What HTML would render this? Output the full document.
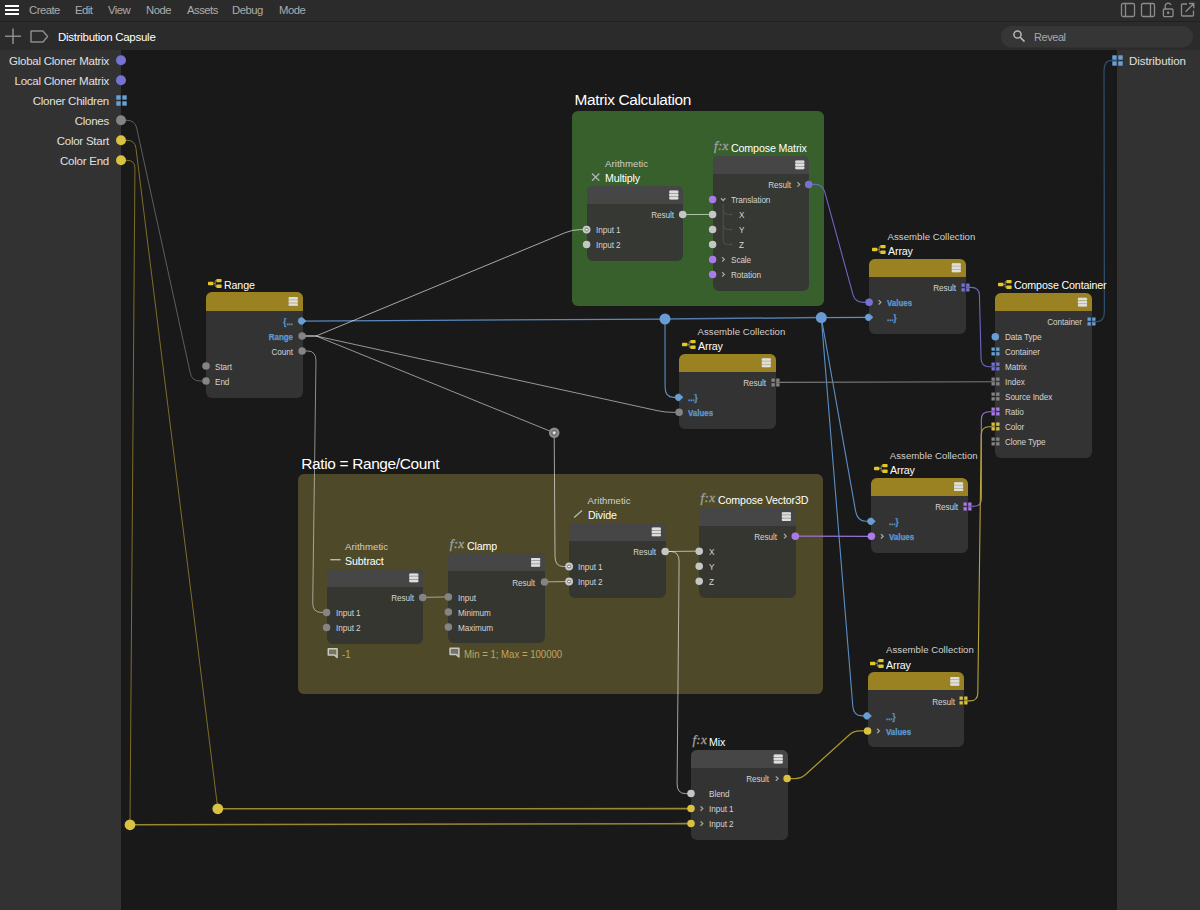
<!DOCTYPE html>
<html lang="en">
<head>
<meta charset="utf-8">
<title>Distribution Capsule</title>
<style>
*{box-sizing:border-box;margin:0;padding:0}
html,body{width:1200px;height:910px;overflow:hidden;background:#191919}
body{position:relative;font-family:"Liberation Sans",sans-serif;color:#d0d0d0;font-size:9px}
.abs,.node,.ttl,.sub,.pl,.sl,.fx,.ic,.cm,.grp,.gt,svg.lay{position:absolute}
#menubar{position:absolute;left:0;top:0;width:1200px;height:21px;background:#2b2b2b}
#toolbar{position:absolute;left:0;top:22px;width:1200px;height:28px;background:#2b2b2b}
#sep{position:absolute;left:0;top:21px;width:1200px;height:1px;background:#202020}
#lp{position:absolute;left:0;top:50px;width:121px;height:860px;background:#323232}
#rp{position:absolute;left:1117px;top:50px;width:83px;height:860px;background:#323232}
.mi{position:absolute;top:2.6px;font-size:11.3px;color:#acacac;line-height:14px;white-space:nowrap;letter-spacing:-0.5px}
.node{border-radius:6px;overflow:hidden}
.hd{position:absolute;left:0;top:0;right:0;height:18.4px}
.ttl{font-size:11.6px;line-height:15px;color:#fff;white-space:nowrap;letter-spacing:-0.15px;transform:scaleX(.92);transform-origin:0 50%}
.sub{font-size:9.6px;line-height:12px;color:#d0d0d0;white-space:nowrap;letter-spacing:0.05px}
.pl{font-size:8.8px;line-height:14px;color:#d4d4d4;white-space:nowrap;letter-spacing:-0.08px;transform:scaleX(.93);transform-origin:0 50%}
.pl.b{font-weight:bold;color:#5b9bd5;letter-spacing:0;transform:scaleX(.9);-webkit-text-stroke:0.25px #5b9bd5}
.r{text-align:right}
.pl.r{transform-origin:100% 50%}
.sl{font-size:11.5px;line-height:16px;color:#e0e0e0;white-space:nowrap;letter-spacing:-0.24px}
.fx{font-family:"Liberation Serif",serif;font-style:italic;font-size:13px;line-height:16px;color:#a2a2a2;letter-spacing:0.3px;-webkit-text-stroke:0.3px #a2a2a2}
.cm{font-size:10px;line-height:12px;color:#c4a45c;white-space:nowrap;transform:scaleX(.96);transform-origin:0 50%}
.grp{border-radius:6px}
.gt{font-size:15.4px;line-height:18px;color:#fff;white-space:nowrap;letter-spacing:-0.33px}
svg.lay .cv{fill:none;stroke:#a6a6a6;stroke-width:1.25}
</style>
</head>
<body>
<div class="grp" style="left:571.7px;top:110.7px;width:252.4px;height:195.4px;background:#37602d"></div>
<div class="grp" style="left:297.8px;top:474.2px;width:525.4px;height:219.5px;background:#4e4a29"></div>
<div class="gt" style="left:574.6px;top:90.6px">Matrix Calculation</div>
<div class="gt" style="left:301.3px;top:454.600px">Ratio = Range/Count</div>
<div id="lp"></div><div id="rp"></div>
<svg class="lay" style="left:0;top:0" width="1200" height="910" viewBox="0 0 1200 910">
<path d="M121 120.3L127 120.3Q135 120.3 136.71 128.12L190.29 373.18Q192 381 200 381L206 381" stroke="#5e5e5e" stroke-width="1.0" fill="none"/>
<path d="M121 140.3L127 140.3Q135 140.3 135.98 148.24L217.8 808.8" stroke="#7d6e26" stroke-width="1.0" fill="none"/>
<path d="M217.8 808.8L691 808.6" stroke="#9a8732" stroke-width="1.6" fill="none"/>
<path d="M121 160.3L127 160.3Q135 160.3 134.94 168.3L130 824.8" stroke="#7d6e26" stroke-width="1.0" fill="none"/>
<path d="M130 824.8L669 823.72Q677 823.7 685 823.64L691 823.6" stroke="#9a8732" stroke-width="1.6" fill="none"/>
<path d="M302.1 321L665 319" stroke="#588abf" stroke-width="1.25" fill="none"/>
<path d="M665 319L821.3 317.6" stroke="#4f7aa9" stroke-width="1.5" fill="none"/>
<path d="M821.3 317.6L869.1 317.35" stroke="#5b8ec6" stroke-width="1.4" fill="none"/>
<path d="M665 319L665.09 387.35Q665.1 397.35 673.5 397.35L679.1 397.35" stroke="#5b8ec6" stroke-width="1.1" fill="none"/>
<path d="M821.3 317.6L855.65 511.45Q857.4 521.3 865.8 521.3L871.4 521.3" stroke="#5b8ec6" stroke-width="1.1" fill="none"/>
<path d="M821.3 317.6L852.79 705.93Q853.6 715.9 862 715.9L867.6 715.9" stroke="#5b8ec6" stroke-width="1.1" fill="none"/>
<path d="M302.1 336L316.1 336" stroke="#8e8e8e" stroke-width="2.0" fill="none"/>
<path d="M316.1 336L565.21 232.67Q572.6 229.6 580.6 229.6L586.6 229.6" stroke="#ffffff" stroke-width="1.0" stroke-opacity="0.62" fill="none"/>
<path d="M316.1 336L657.28 410.64Q665.1 412.35 673.1 412.35L679.1 412.35" stroke="#ffffff" stroke-width="1.0" stroke-opacity="0.55" fill="none"/>
<path d="M316.1 336L554.2 432.8" stroke="#ffffff" stroke-width="1.0" stroke-opacity="0.55" fill="none"/>
<path d="M554.2 432.8L555.03 556.5Q555.1 566.5 563.5 566.5L569.1 566.5" stroke="#ffffff" stroke-width="1.0" stroke-opacity="0.6" fill="none"/>
<path d="M302.1 351L307.7 351Q316.1 351 315.97 361L312.73 602.4Q312.6 612.4 321 612.4L326.6 612.4" stroke="#ffffff" stroke-width="1.0" stroke-opacity="0.5" fill="none"/>
<path d="M682.7 214.6L712.6 214.4" stroke="#ffffff" stroke-width="1.0" stroke-opacity="0.62" fill="none"/>
<path d="M808.7 184.4L814.7 184.4Q822.7 184.4 824.82 192.11L852.98 294.64Q855.1 302.35 863.1 302.35L869.1 302.35" stroke="#6b67c2" stroke-width="1.1" fill="none"/>
<path d="M965.2 287.35L971.2 287.35Q979.2 287.35 979.41 295.35L981.09 358.7Q981.3 366.7 989.3 366.7L995.3 366.7" stroke="#6b67c2" stroke-width="1.1" fill="none"/>
<path d="M775.2 382.35L995.3 381.7" stroke="#787878" stroke-width="1.05" fill="none"/>
<path d="M1091.4 321.7L1096.6 321.7Q1104.4 321.7 1104.38 311.7L1104.02 70.3Q1104 60.3 1111.8 60.3L1117 60.3" stroke="#30506f" stroke-width="1.2" fill="none"/>
<path d="M422.7 597.4L448.4 596.9" stroke="#ffffff" stroke-width="1.0" stroke-opacity="0.5" fill="none"/>
<path d="M544.5 581.9L569.1 581.5" stroke="#ffffff" stroke-width="1.0" stroke-opacity="0.55" fill="none"/>
<path d="M665.2 551.5L699.2 551.15" stroke="#ffffff" stroke-width="1.0" stroke-opacity="0.6" fill="none"/>
<path d="M665.2 551.5L670.8 551.5Q679.2 551.5 679.11 561.5L677.09 783.6Q677 793.6 685.4 793.6L691 793.6" stroke="#ffffff" stroke-width="1.0" stroke-opacity="0.6" fill="none"/>
<path d="M795.3 536.15L871.4 536.3" stroke="#9a72d6" stroke-width="1.2" fill="none"/>
<path d="M967.5 506.3L973.5 506.3Q981.5 506.3 981.48 498.3L981.32 419.7Q981.3 411.7 989.3 411.7L995.3 411.7" stroke="#9a72d6" stroke-width="1.1" fill="none"/>
<path d="M963.7 700.9L969.7 700.9Q977.7 700.9 977.81 692.9L981.19 434.7Q981.3 426.7 989.3 426.7L995.3 426.7" stroke="#b8a238" stroke-width="1.1" fill="none"/>
<path d="M787.1 778.6L795.1 778.6Q801.1 778.6 805.54 774.57L849.16 734.93Q853.6 730.9 859.6 730.9L867.6 730.9" stroke="#a8942f" stroke-width="1.3" fill="none"/>
<circle cx="665" cy="319" r="5.500" fill="#689cd2"/>
<circle cx="821.3" cy="317.6" r="5.500" fill="#689cd2"/>
<circle cx="217.8" cy="808.8" r="5.400" fill="#d9c141"/>
<circle cx="130" cy="824.8" r="5.400" fill="#d9c141"/>
<circle cx="554.2" cy="432.8" r="5.300" fill="#8c8c8c"/><circle cx="554.2" cy="432.8" r="2.600" fill="none" stroke="#6c6c6c" stroke-width="1"/><circle cx="554.2" cy="432.8" r="1.400" fill="#e6e6e6"/>
</svg>
<div class="node" style="left:206px;top:292.2px;width:96.5px;height:105.4px;background:#333333"><div class="hd" style="background:#9a8223"></div></div>
<div class="ttl" style="left:224.4px;top:277px">Range</div>
<svg class="ic" style="left:208.4px;top:278.9px" width="14" height="10" viewBox="0 0 14 10"><path d="M5.4 4.5h1.8M7.2 1.7v5.6M7.2 1.700h1.2M7.2 7.3h1.2" stroke="#8a8a8a" stroke-width="0.9" fill="none"/><rect x="0" y="2.8" width="5.4" height="3.4" rx="0.7" fill="#e3c725"/><rect x="8.3" y="0" width="5.3" height="3.300" rx="0.7" fill="#e3c725"/><rect x="8.3" y="5.6" width="5.3" height="3.300" rx="0.7" fill="#e3c725"/></svg>
<div class="pl b r" style="left:206px;width:87px;top:315px">{...</div>
<div class="pl b r" style="left:206px;width:87px;top:330px">Range</div>
<div class="pl r" style="left:206px;width:87px;top:345px">Count</div>
<div class="pl" style="left:215.3px;top:360px">Start</div>
<div class="pl" style="left:215.3px;top:375px">End</div>
<div class="node" style="left:586.6px;top:185.8px;width:96.5px;height:75.4px;background:#353833"><div class="hd" style="background:#464646"></div></div>
<div class="ttl" style="left:605px;top:170px">Multiply</div>
<div class="sub" style="left:605px;top:158px">Arithmetic</div>
<div class="pl r" style="left:586.6px;width:87px;top:208px">Result</div>
<div class="pl" style="left:595.9px;top:223px">Input 1</div>
<div class="pl" style="left:595.9px;top:238px">Input 2</div>
<div class="node" style="left:712.6px;top:155.6px;width:96.5px;height:135.4px;background:#353833"><div class="hd" style="background:#464646"></div></div>
<div class="ttl" style="left:731px;top:140px">Compose Matrix</div>
<div class="fx" style="left:714px;top:138.25px">f:x</div>
<div class="pl r" style="left:712.6px;width:78px;top:178px">Result</div>
<div class="pl" style="left:730.8px;top:193px">Translation</div>
<div class="pl" style="left:739.3px;top:208px">X</div>
<div class="pl" style="left:739.3px;top:223px">Y</div>
<div class="pl" style="left:739.3px;top:238px">Z</div>
<div class="pl" style="left:730.8px;top:253px">Scale</div>
<div class="pl" style="left:730.8px;top:268px">Rotation</div>
<div class="node" style="left:869.1px;top:258.55px;width:96.5px;height:75.4px;background:#333333"><div class="hd" style="background:#9a8223"></div></div>
<div class="ttl" style="left:887.5px;top:243px">Array</div>
<div class="sub" style="left:887.5px;top:231px">Assemble Collection</div>
<svg class="ic" style="left:871.5px;top:245.25px" width="14" height="10" viewBox="0 0 14 10"><path d="M5.4 4.5h1.8M7.2 1.7v5.6M7.2 1.700h1.2M7.2 7.3h1.2" stroke="#8a8a8a" stroke-width="0.9" fill="none"/><rect x="0" y="2.8" width="5.4" height="3.4" rx="0.7" fill="#e3c725"/><rect x="8.3" y="0" width="5.3" height="3.300" rx="0.7" fill="#e3c725"/><rect x="8.3" y="5.6" width="5.3" height="3.300" rx="0.7" fill="#e3c725"/></svg>
<div class="pl r" style="left:869.1px;width:87px;top:281px">Result</div>
<div class="pl b" style="left:887.1px;top:296px">Values</div>
<div class="pl b" style="left:887.1px;top:311px">...}</div>
<div class="node" style="left:679.1px;top:353.55px;width:96.5px;height:75.4px;background:#333333"><div class="hd" style="background:#9a8223"></div></div>
<div class="ttl" style="left:697.5px;top:338px">Array</div>
<div class="sub" style="left:697.5px;top:326px">Assemble Collection</div>
<svg class="ic" style="left:681.5px;top:340.25px" width="14" height="10" viewBox="0 0 14 10"><path d="M5.4 4.5h1.8M7.2 1.7v5.6M7.2 1.700h1.2M7.2 7.3h1.2" stroke="#8a8a8a" stroke-width="0.9" fill="none"/><rect x="0" y="2.8" width="5.4" height="3.4" rx="0.7" fill="#e3c725"/><rect x="8.3" y="0" width="5.3" height="3.300" rx="0.7" fill="#e3c725"/><rect x="8.3" y="5.6" width="5.3" height="3.300" rx="0.7" fill="#e3c725"/></svg>
<div class="pl r" style="left:679.1px;width:87px;top:376px">Result</div>
<div class="pl b" style="left:688.4px;top:391px">...}</div>
<div class="pl b" style="left:688.4px;top:406px">Values</div>
<div class="node" style="left:995.3px;top:292.9px;width:96.5px;height:165.4px;background:#333333"><div class="hd" style="background:#9a8223"></div></div>
<div class="ttl" style="left:1013.7px;top:277px">Compose Container</div>
<svg class="ic" style="left:997.7px;top:279.6px" width="14" height="10" viewBox="0 0 14 10"><path d="M5.4 4.5h1.8M7.2 1.7v5.6M7.2 1.700h1.2M7.2 7.3h1.2" stroke="#8a8a8a" stroke-width="0.9" fill="none"/><rect x="0" y="2.8" width="5.4" height="3.4" rx="0.7" fill="#e3c725"/><rect x="8.3" y="0" width="5.3" height="3.300" rx="0.7" fill="#e3c725"/><rect x="8.3" y="5.6" width="5.3" height="3.300" rx="0.7" fill="#e3c725"/></svg>
<div class="pl r" style="left:995.3px;width:87px;top:315px">Container</div>
<div class="pl" style="left:1004.6px;top:330px">Data Type</div>
<div class="pl" style="left:1004.6px;top:345px">Container</div>
<div class="pl" style="left:1004.6px;top:360px">Matrix</div>
<div class="pl" style="left:1004.6px;top:375px">Index</div>
<div class="pl" style="left:1004.6px;top:390px">Source Index</div>
<div class="pl" style="left:1004.6px;top:405px">Ratio</div>
<div class="pl" style="left:1004.6px;top:420px">Color</div>
<div class="pl" style="left:1004.6px;top:435px">Clone Type</div>
<div class="node" style="left:871.4px;top:477.5px;width:96.5px;height:75.4px;background:#333333"><div class="hd" style="background:#9a8223"></div></div>
<div class="ttl" style="left:889.8px;top:462px">Array</div>
<div class="sub" style="left:889.8px;top:450px">Assemble Collection</div>
<svg class="ic" style="left:873.8px;top:464.2px" width="14" height="10" viewBox="0 0 14 10"><path d="M5.4 4.5h1.8M7.2 1.7v5.6M7.2 1.700h1.2M7.2 7.3h1.2" stroke="#8a8a8a" stroke-width="0.9" fill="none"/><rect x="0" y="2.8" width="5.4" height="3.4" rx="0.7" fill="#e3c725"/><rect x="8.3" y="0" width="5.3" height="3.300" rx="0.7" fill="#e3c725"/><rect x="8.3" y="5.6" width="5.3" height="3.300" rx="0.7" fill="#e3c725"/></svg>
<div class="pl r" style="left:871.4px;width:87px;top:500px">Result</div>
<div class="pl b" style="left:889.4px;top:515px">...}</div>
<div class="pl b" style="left:889.4px;top:530px">Values</div>
<div class="node" style="left:867.6px;top:672.1px;width:96.5px;height:75.4px;background:#333333"><div class="hd" style="background:#9a8223"></div></div>
<div class="ttl" style="left:886px;top:657px">Array</div>
<div class="sub" style="left:886px;top:644px">Assemble Collection</div>
<svg class="ic" style="left:870px;top:658.8px" width="14" height="10" viewBox="0 0 14 10"><path d="M5.4 4.5h1.8M7.2 1.7v5.6M7.2 1.700h1.2M7.2 7.3h1.2" stroke="#8a8a8a" stroke-width="0.9" fill="none"/><rect x="0" y="2.8" width="5.4" height="3.4" rx="0.7" fill="#e3c725"/><rect x="8.3" y="0" width="5.3" height="3.300" rx="0.7" fill="#e3c725"/><rect x="8.3" y="5.6" width="5.3" height="3.300" rx="0.7" fill="#e3c725"/></svg>
<div class="pl r" style="left:867.6px;width:87px;top:695px">Result</div>
<div class="pl b" style="left:885.6px;top:710px">...}</div>
<div class="pl b" style="left:885.6px;top:725px">Values</div>
<div class="node" style="left:326.6px;top:568.6px;width:96.5px;height:75.4px;background:#363630"><div class="hd" style="background:#464646"></div></div>
<div class="ttl" style="left:345px;top:553px">Subtract</div>
<div class="sub" style="left:345px;top:541px">Arithmetic</div>
<div class="pl r" style="left:326.6px;width:87px;top:591px">Result</div>
<div class="pl" style="left:335.9px;top:606px">Input 1</div>
<div class="pl" style="left:335.9px;top:621px">Input 2</div>
<div class="cm" style="left:341.8px;top:649px">-1</div>
<div class="node" style="left:448.4px;top:553.1px;width:96.5px;height:90.4px;background:#363630"><div class="hd" style="background:#464646"></div></div>
<div class="ttl" style="left:466.8px;top:538px">Clamp</div>
<div class="fx" style="left:449.8px;top:535.75px">f:x</div>
<div class="pl r" style="left:448.4px;width:87px;top:576px">Result</div>
<div class="pl" style="left:457.7px;top:591px">Input</div>
<div class="pl" style="left:457.7px;top:606px">Minimum</div>
<div class="pl" style="left:457.7px;top:621px">Maximum</div>
<div class="cm" style="left:463.6px;top:649px">Min = 1; Max = 100000</div>
<div class="node" style="left:569.1px;top:522.7px;width:96.5px;height:75.4px;background:#363630"><div class="hd" style="background:#464646"></div></div>
<div class="ttl" style="left:587.5px;top:507px">Divide</div>
<div class="sub" style="left:587.5px;top:495px">Arithmetic</div>
<div class="pl r" style="left:569.1px;width:87px;top:545px">Result</div>
<div class="pl" style="left:578.4px;top:560px">Input 1</div>
<div class="pl" style="left:578.4px;top:575px">Input 2</div>
<div class="node" style="left:699.2px;top:507.35px;width:96.5px;height:90.4px;background:#363630"><div class="hd" style="background:#464646"></div></div>
<div class="ttl" style="left:717.6px;top:492px">Compose Vector3D</div>
<div class="fx" style="left:700.6px;top:490px">f:x</div>
<div class="pl r" style="left:699.2px;width:78px;top:530px">Result</div>
<div class="pl" style="left:708.5px;top:545px">X</div>
<div class="pl" style="left:708.5px;top:560px">Y</div>
<div class="pl" style="left:708.5px;top:575px">Z</div>
<div class="node" style="left:691px;top:749.8px;width:96.5px;height:90.4px;background:#333333"><div class="hd" style="background:#464646"></div></div>
<div class="ttl" style="left:709.4px;top:734px">Mix</div>
<div class="fx" style="left:692.4px;top:732.45px">f:x</div>
<div class="pl r" style="left:691px;width:78px;top:772px">Result</div>
<div class="pl" style="left:709px;top:787px">Blend</div>
<div class="pl" style="left:709px;top:802px">Input 1</div>
<div class="pl" style="left:709px;top:817px">Input 2</div>
<div class="sl r" style="left:0;width:109px;top:52.7px">Global Cloner Matrix</div>
<div class="sl r" style="left:0;width:109px;top:72.7px">Local Cloner Matrix</div>
<div class="sl r" style="left:0;width:109px;top:92.7px">Cloner Children</div>
<div class="sl r" style="left:0;width:109px;top:112.7px">Clones</div>
<div class="sl r" style="left:0;width:109px;top:132.7px">Color Start</div>
<div class="sl r" style="left:0;width:109px;top:152.7px">Color End</div>
<div class="sl" style="left:1129px;top:52.700px;letter-spacing:-0.06px">Distribution</div>
<svg class="lay" style="left:0;top:0" width="1200" height="910" viewBox="0 0 1200 910">
<rect x="288.6" y="297" width="9.2" height="8.8" rx="1.6" fill="#dcdcdc" fill-opacity="0.5"/><g fill="#dedede"><rect x="288.6" y="297" width="9.2" height="2.4" rx="0.9"/><rect x="288.6" y="300.2" width="9.2" height="2.4" rx="0.9"/><rect x="288.6" y="303.4" width="9.2" height="2.4" rx="0.9"/></g>
<path d="M302.7 317.8L306 321L302.7 324.2A3.400 3.400 0 1 1 302.7 317.8z" fill="#68a0d6" stroke="#68a0d6" stroke-width="0.6" stroke-linejoin="round"/>
<circle cx="302.1" cy="336" r="3.75" fill="#848484"/>
<circle cx="302.1" cy="351" r="3.75" fill="#848484"/>
<circle cx="206" cy="366" r="3.75" fill="#848484"/>
<circle cx="206" cy="381" r="3.75" fill="#848484"/>
<rect x="669.2" y="190.6" width="9.2" height="8.8" rx="1.6" fill="#dcdcdc" fill-opacity="0.5"/><g fill="#dedede"><rect x="669.2" y="190.6" width="9.2" height="2.4" rx="0.9"/><rect x="669.2" y="193.8" width="9.2" height="2.4" rx="0.9"/><rect x="669.2" y="197" width="9.2" height="2.4" rx="0.9"/></g>
<path d="M592 173.5l7.300 7.200M599.3 173.5l-7.300 7.200" stroke="#b4b4b4" stroke-width="1.3" fill="none"/>
<circle cx="682.7" cy="214.6" r="3.75" fill="#c6c6c6"/>
<circle cx="586.6" cy="229.6" r="3.900" fill="#cacaca"/><circle cx="586.6" cy="229.6" r="2.100" fill="#8e8e8e"/><rect x="585.5" y="229" width="2.200" height="1.200" rx="0.4" fill="#fff"/>
<circle cx="586.6" cy="244.6" r="3.75" fill="#c6c6c6"/>
<rect x="795.2" y="160.4" width="9.2" height="8.8" rx="1.6" fill="#dcdcdc" fill-opacity="0.5"/><g fill="#dedede"><rect x="795.2" y="160.4" width="9.2" height="2.4" rx="0.9"/><rect x="795.2" y="163.6" width="9.2" height="2.4" rx="0.9"/><rect x="795.2" y="166.8" width="9.2" height="2.4" rx="0.9"/></g>
<path d="M797.4 182.2l2.300 2.200l-2.300 2.200" class="cv"/>
<circle cx="808.7" cy="184.4" r="3.75" fill="#7672d2"/>
<path d="M721 198.2l2.200 2.300l2.200 -2.300" class="cv"/>
<circle cx="712.6" cy="199.4" r="3.75" fill="#aa7be8"/>
<circle cx="712.6" cy="214.4" r="3.75" fill="#c6c6c6"/>
<circle cx="712.6" cy="229.4" r="3.75" fill="#c6c6c6"/>
<circle cx="712.6" cy="244.4" r="3.75" fill="#c6c6c6"/>
<path d="M722.1 257.2l2.300 2.200l-2.300 2.200" class="cv"/>
<circle cx="712.6" cy="259.4" r="3.75" fill="#aa7be8"/>
<path d="M722.1 272.2l2.300 2.200l-2.300 2.200" class="cv"/>
<circle cx="712.6" cy="274.4" r="3.75" fill="#aa7be8"/>
<rect x="951.7" y="263.35" width="9.2" height="8.8" rx="1.6" fill="#dcdcdc" fill-opacity="0.5"/><g fill="#dedede"><rect x="951.7" y="263.35" width="9.2" height="2.4" rx="0.9"/><rect x="951.7" y="266.55" width="9.2" height="2.4" rx="0.9"/><rect x="951.7" y="269.75" width="9.2" height="2.4" rx="0.9"/></g>
<g fill="#7672d2"><rect x="961.5" y="283.5" width="3.3" height="3.3"/><rect x="966.2" y="283.5" width="3.3" height="3.3"/><rect x="961.5" y="288.2" width="3.3" height="3.3"/><rect x="966.2" y="288.2" width="3.3" height="3.3"/></g>
<path d="M878.6 300.15l2.300 2.200l-2.300 2.200" class="cv"/>
<circle cx="869.1" cy="302.35" r="3.75" fill="#7672d2"/>
<path d="M869.7 314.15L873 317.35L869.7 320.55A3.400 3.400 0 1 1 869.7 314.15z" fill="#68a0d6" stroke="#68a0d6" stroke-width="0.6" stroke-linejoin="round"/>
<rect x="761.7" y="358.35" width="9.2" height="8.8" rx="1.6" fill="#dcdcdc" fill-opacity="0.5"/><g fill="#dedede"><rect x="761.7" y="358.35" width="9.2" height="2.4" rx="0.9"/><rect x="761.7" y="361.55" width="9.2" height="2.4" rx="0.9"/><rect x="761.7" y="364.75" width="9.2" height="2.4" rx="0.9"/></g>
<g fill="#848484"><rect x="771.5" y="378.5" width="3.3" height="3.3"/><rect x="776.2" y="378.5" width="3.3" height="3.3"/><rect x="771.5" y="383.2" width="3.3" height="3.3"/><rect x="776.2" y="383.2" width="3.3" height="3.3"/></g>
<path d="M679.7 394.15L683 397.35L679.7 400.55A3.400 3.400 0 1 1 679.7 394.15z" fill="#68a0d6" stroke="#68a0d6" stroke-width="0.6" stroke-linejoin="round"/>
<circle cx="679.1" cy="412.35" r="3.75" fill="#848484"/>
<rect x="1077.9" y="297.7" width="9.2" height="8.8" rx="1.6" fill="#dcdcdc" fill-opacity="0.5"/><g fill="#dedede"><rect x="1077.9" y="297.7" width="9.2" height="2.4" rx="0.9"/><rect x="1077.9" y="300.9" width="9.2" height="2.4" rx="0.9"/><rect x="1077.9" y="304.1" width="9.2" height="2.4" rx="0.9"/></g>
<g fill="#68a0d6"><rect x="1087.5" y="317.5" width="3.3" height="3.3"/><rect x="1092.2" y="317.5" width="3.3" height="3.3"/><rect x="1087.5" y="322.2" width="3.3" height="3.3"/><rect x="1092.2" y="322.2" width="3.3" height="3.3"/></g>
<circle cx="995.3" cy="336.7" r="3.75" fill="#68a0d6"/>
<g fill="#68a0d6"><rect x="991.5" y="347.5" width="3.3" height="3.3"/><rect x="996.2" y="347.5" width="3.3" height="3.3"/><rect x="991.5" y="352.2" width="3.3" height="3.3"/><rect x="996.2" y="352.2" width="3.3" height="3.3"/></g>
<g fill="#7672d2"><rect x="991.5" y="362.5" width="3.3" height="3.3"/><rect x="996.2" y="362.5" width="3.3" height="3.3"/><rect x="991.5" y="367.2" width="3.3" height="3.3"/><rect x="996.2" y="367.2" width="3.3" height="3.3"/></g>
<g fill="#848484"><rect x="991.5" y="377.5" width="3.3" height="3.3"/><rect x="996.2" y="377.5" width="3.3" height="3.3"/><rect x="991.5" y="382.2" width="3.3" height="3.3"/><rect x="996.2" y="382.2" width="3.3" height="3.3"/></g>
<g fill="#848484"><rect x="991.5" y="392.5" width="3.3" height="3.3"/><rect x="996.2" y="392.5" width="3.3" height="3.3"/><rect x="991.5" y="397.2" width="3.3" height="3.3"/><rect x="996.2" y="397.2" width="3.3" height="3.3"/></g>
<g fill="#aa7be8"><rect x="991.5" y="407.5" width="3.3" height="3.3"/><rect x="996.2" y="407.5" width="3.3" height="3.3"/><rect x="991.5" y="412.2" width="3.3" height="3.3"/><rect x="996.2" y="412.2" width="3.3" height="3.3"/></g>
<g fill="#d9c141"><rect x="991.5" y="422.5" width="3.3" height="3.3"/><rect x="996.2" y="422.5" width="3.3" height="3.3"/><rect x="991.5" y="427.2" width="3.3" height="3.3"/><rect x="996.2" y="427.2" width="3.3" height="3.3"/></g>
<g fill="#848484"><rect x="991.5" y="437.5" width="3.3" height="3.3"/><rect x="996.2" y="437.5" width="3.3" height="3.3"/><rect x="991.5" y="442.2" width="3.3" height="3.3"/><rect x="996.2" y="442.2" width="3.3" height="3.3"/></g>
<rect x="954" y="482.3" width="9.2" height="8.8" rx="1.6" fill="#dcdcdc" fill-opacity="0.5"/><g fill="#dedede"><rect x="954" y="482.3" width="9.2" height="2.4" rx="0.9"/><rect x="954" y="485.5" width="9.2" height="2.4" rx="0.9"/><rect x="954" y="488.7" width="9.2" height="2.4" rx="0.9"/></g>
<g fill="#aa7be8"><rect x="963.5" y="502.5" width="3.3" height="3.3"/><rect x="968.2" y="502.5" width="3.3" height="3.3"/><rect x="963.5" y="507.2" width="3.3" height="3.3"/><rect x="968.2" y="507.2" width="3.3" height="3.3"/></g>
<path d="M872 518.1L875.3 521.3L872 524.5A3.400 3.400 0 1 1 872 518.1z" fill="#68a0d6" stroke="#68a0d6" stroke-width="0.6" stroke-linejoin="round"/>
<path d="M880.9 534.1l2.300 2.200l-2.300 2.200" class="cv"/>
<circle cx="871.4" cy="536.3" r="3.75" fill="#aa7be8"/>
<rect x="950.2" y="676.9" width="9.2" height="8.8" rx="1.6" fill="#dcdcdc" fill-opacity="0.5"/><g fill="#dedede"><rect x="950.2" y="676.9" width="9.2" height="2.4" rx="0.9"/><rect x="950.2" y="680.1" width="9.2" height="2.4" rx="0.9"/><rect x="950.2" y="683.3" width="9.2" height="2.4" rx="0.9"/></g>
<g fill="#d9c141"><rect x="959.5" y="696.5" width="3.3" height="3.3"/><rect x="964.2" y="696.5" width="3.3" height="3.3"/><rect x="959.5" y="701.2" width="3.3" height="3.3"/><rect x="964.2" y="701.2" width="3.3" height="3.3"/></g>
<path d="M868.2 712.7L871.5 715.9L868.2 719.1A3.400 3.400 0 1 1 868.2 712.7z" fill="#68a0d6" stroke="#68a0d6" stroke-width="0.6" stroke-linejoin="round"/>
<path d="M877.1 728.7l2.300 2.200l-2.300 2.200" class="cv"/>
<circle cx="867.6" cy="730.9" r="3.75" fill="#d9c141"/>
<rect x="409.2" y="573.4" width="9.2" height="8.8" rx="1.6" fill="#dcdcdc" fill-opacity="0.5"/><g fill="#dedede"><rect x="409.2" y="573.4" width="9.2" height="2.4" rx="0.9"/><rect x="409.2" y="576.6" width="9.2" height="2.4" rx="0.9"/><rect x="409.2" y="579.8" width="9.2" height="2.4" rx="0.9"/></g>
<path d="M330.3 559.7h10.200" stroke="#b8b8b8" stroke-width="1.4" fill="none"/>
<circle cx="422.7" cy="597.4" r="3.75" fill="#848484"/>
<circle cx="326.6" cy="612.4" r="3.75" fill="#848484"/>
<circle cx="326.6" cy="627.4" r="3.75" fill="#848484"/>
<path d="M328.3 648.7h8.800v8.800l-2.400 -2.400h-6.400z" fill="#77745c" stroke="#c8c8c8" stroke-width="1.5" stroke-linejoin="round"/>
<rect x="531" y="557.9" width="9.2" height="8.8" rx="1.6" fill="#dcdcdc" fill-opacity="0.5"/><g fill="#dedede"><rect x="531" y="557.9" width="9.2" height="2.4" rx="0.9"/><rect x="531" y="561.1" width="9.2" height="2.4" rx="0.9"/><rect x="531" y="564.3" width="9.2" height="2.4" rx="0.9"/></g>
<circle cx="544.5" cy="581.9" r="3.75" fill="#848484"/>
<circle cx="448.4" cy="596.9" r="3.75" fill="#848484"/>
<circle cx="448.4" cy="611.9" r="3.75" fill="#848484"/>
<circle cx="448.4" cy="626.9" r="3.75" fill="#848484"/>
<path d="M450.1 648.2h8.800v8.800l-2.400 -2.400h-6.400z" fill="#77745c" stroke="#c8c8c8" stroke-width="1.5" stroke-linejoin="round"/>
<rect x="651.7" y="527.5" width="9.2" height="8.8" rx="1.6" fill="#dcdcdc" fill-opacity="0.5"/><g fill="#dedede"><rect x="651.7" y="527.5" width="9.2" height="2.4" rx="0.9"/><rect x="651.7" y="530.7" width="9.2" height="2.4" rx="0.9"/><rect x="651.7" y="533.9" width="9.2" height="2.4" rx="0.9"/></g>
<path d="M574.2 517.4l7.800 -7.000" stroke="#b4b4b4" stroke-width="1.4" fill="none"/>
<circle cx="665.2" cy="551.5" r="3.75" fill="#c6c6c6"/>
<circle cx="569.1" cy="566.5" r="3.900" fill="#cacaca"/><circle cx="569.1" cy="566.5" r="2.100" fill="#8e8e8e"/><rect x="568" y="565.9" width="2.200" height="1.200" rx="0.4" fill="#fff"/>
<circle cx="569.1" cy="581.5" r="3.900" fill="#cacaca"/><circle cx="569.1" cy="581.5" r="2.100" fill="#8e8e8e"/><rect x="568" y="580.9" width="2.200" height="1.200" rx="0.4" fill="#fff"/>
<rect x="781.8" y="512.15" width="9.2" height="8.8" rx="1.6" fill="#dcdcdc" fill-opacity="0.5"/><g fill="#dedede"><rect x="781.8" y="512.15" width="9.2" height="2.4" rx="0.9"/><rect x="781.8" y="515.35" width="9.2" height="2.4" rx="0.9"/><rect x="781.8" y="518.55" width="9.2" height="2.4" rx="0.9"/></g>
<path d="M784 533.95l2.300 2.200l-2.300 2.200" class="cv"/>
<circle cx="795.3" cy="536.15" r="3.75" fill="#aa7be8"/>
<circle cx="699.2" cy="551.15" r="3.75" fill="#c6c6c6"/>
<circle cx="699.2" cy="566.15" r="3.75" fill="#c6c6c6"/>
<circle cx="699.2" cy="581.15" r="3.75" fill="#c6c6c6"/>
<rect x="773.6" y="754.6" width="9.2" height="8.8" rx="1.6" fill="#dcdcdc" fill-opacity="0.5"/><g fill="#dedede"><rect x="773.6" y="754.6" width="9.2" height="2.4" rx="0.9"/><rect x="773.6" y="757.8" width="9.2" height="2.4" rx="0.9"/><rect x="773.6" y="761" width="9.2" height="2.4" rx="0.9"/></g>
<path d="M775.8 776.4l2.300 2.200l-2.300 2.200" class="cv"/>
<circle cx="787.1" cy="778.6" r="3.75" fill="#d9c141"/>
<circle cx="691" cy="793.6" r="3.75" fill="#c6c6c6"/>
<path d="M700.5 806.4l2.300 2.200l-2.300 2.200" class="cv"/>
<circle cx="691" cy="808.6" r="3.75" fill="#d9c141"/>
<path d="M700.5 821.4l2.300 2.200l-2.300 2.200" class="cv"/>
<circle cx="691" cy="823.6" r="3.75" fill="#d9c141"/>
<path d="M723.2 203.9V240.4q0 4 4 4h4M723.2 210.4q0 4 4 4h4M723.2 225.4q0 4 4 4h4" stroke="#505350" stroke-width="0.9" fill="none"/>
<path d="M730.8 213.1l1.600 1.300l-1.600 1.300z" fill="#505350"/>
<path d="M730.8 228.1l1.600 1.300l-1.600 1.300z" fill="#505350"/>
<path d="M730.8 243.1l1.600 1.300l-1.600 1.300z" fill="#505350"/>
<circle cx="121" cy="60.3" r="5" fill="#7672d2"/>
<circle cx="121" cy="80.3" r="5" fill="#7672d2"/>
<g fill="#68a0d6"><rect x="116.3" y="95.3" width="4.4" height="4.4"/><rect x="122.3" y="95.3" width="4.4" height="4.4"/><rect x="116.3" y="101.3" width="4.4" height="4.4"/><rect x="122.3" y="101.3" width="4.4" height="4.4"/></g>
<circle cx="121" cy="120.3" r="5" fill="#848484"/>
<circle cx="121" cy="140.3" r="5" fill="#d9c141"/>
<circle cx="121" cy="160.3" r="5" fill="#d9c141"/>
<g fill="#68a0d6"><rect x="1112.3" y="55.3" width="4.4" height="4.4"/><rect x="1118.3" y="55.3" width="4.4" height="4.4"/><rect x="1112.3" y="61.3" width="4.4" height="4.4"/><rect x="1118.3" y="61.3" width="4.4" height="4.4"/></g>
</svg>
<div id="menubar"></div><div id="sep"></div><div id="toolbar"></div>
<svg class="lay" style="left:0;top:0" width="1200" height="50" viewBox="0 0 1200 50"><g fill="#fff"><rect x="5" y="5" width="14" height="2"/><rect x="5" y="9" width="14" height="2"/><rect x="5" y="13" width="14" height="2"/></g><path d="M13 28.500v15.500M5 36.200h16" stroke="#8a8a8a" stroke-width="1.600" fill="none"/><path d="M31 31h12l4.500 5.500l-4.500 5.500h-12z" stroke="#8a8a8a" stroke-width="1.500" stroke-linejoin="round" fill="none"/><rect x="1001" y="26" width="192" height="21.500" rx="10.700" fill="#363636"/><circle cx="1017.500" cy="34.500" r="3.600" stroke="#b8b8b8" stroke-width="1.500" fill="none"/><path d="M1020.200 37.300l4.300 4.300" stroke="#b8b8b8" stroke-width="1.600"/><g stroke="#8c8c8c" stroke-width="1.300" fill="none"><rect x="1121.500" y="3.500" width="13" height="13" rx="1.500"/><path d="M1125.500 3.500v13"/><rect x="1141.500" y="3.500" width="13" height="13" rx="1.500"/><path d="M1150.500 3.500v13"/><rect x="1163.400" y="9" width="9.600" height="7.600" rx="1"/><path d="M1165.200 9v-3a3 3 0 0 1 5.800 -1"/><path d="M1187 4h-4.500a1 1 0 0 0 -1 1v10a1 1 0 0 0 1 1h10a1 1 0 0 0 1 -1v-4.500M1189 3.500h4.800v4.800M1193.600 3.700l-8 8"/></g><circle cx="1168.200" cy="12.800" r="1.300" fill="#8c8c8c"/></svg>
<div class="mi" style="left:29px">Create</div>
<div class="mi" style="left:75px">Edit</div>
<div class="mi" style="left:108px">View</div>
<div class="mi" style="left:146px">Node</div>
<div class="mi" style="left:187px">Assets</div>
<div class="mi" style="left:232px">Debug</div>
<div class="mi" style="left:279px">Mode</div>
<div class="abs" style="left:58px;top:30px;font-size:11.5px;line-height:15px;color:#fff;letter-spacing:-0.27px;white-space:nowrap">Distribution Capsule</div>
<div class="abs" style="left:1034px;top:29.500px;font-size:11px;line-height:15px;color:#a8a8a8;letter-spacing:-0.45px;white-space:nowrap">Reveal</div>
</body>
</html>
